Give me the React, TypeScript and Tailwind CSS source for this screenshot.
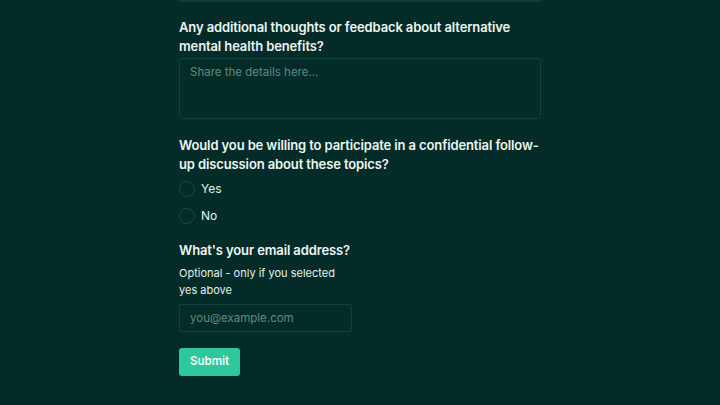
import React, { useState } from 'react';

const font = { fontFamily: 'Inter, "Noto Sans", sans-serif' };

export default function App() {
  const [followUp, setFollowUp] = useState<string | null>(null);

  return (
    <div className="min-h-[405px] w-full bg-[#032c28] text-[#e8f1ee]" style={font}>
      <div className="mx-auto w-[362px] pb-6">
        <div className="h-[2px] w-full rounded-b bg-[#0c3f38]" />

        <div className="mt-[16px]">
          <label className="block text-[13px] font-semibold leading-[19px] tracking-[-0.12px] text-[#eef5f2]">
            Any additional thoughts or feedback about alternative mental health benefits?
          </label>
          <textarea
            placeholder="Share the details here..."
            className="mt-[2px] block h-[61px] w-full resize-none rounded-[2px] border border-[#0e4239] bg-[#032c28] px-[10px] py-[5px] text-[11.5px] text-[#e8f1ee] placeholder:text-[#5e8a80] outline-none"
          />
        </div>

        <div className="mt-[17px]">
          <p className="text-[13px] font-semibold leading-[19px] tracking-[-0.12px] text-[#eef5f2]">
            Would you be willing to participate in a confidential follow-up discussion about these topics?
          </p>
          <div className="mt-[7px] flex flex-col gap-[11px]">
            {['Yes', 'No'].map((opt) => (
              <label key={opt} className="flex cursor-pointer items-center gap-[6px] text-[12px] leading-[16px]">
                <span
                  onClick={() => setFollowUp(opt)}
                  className="flex h-[16px] w-[16px] items-center justify-center rounded-full border border-[#104c42]"
                >
                  {followUp === opt && <span className="h-[8px] w-[8px] rounded-full bg-[#2ec99b]" />}
                </span>
                <span onClick={() => setFollowUp(opt)}>{opt}</span>
              </label>
            ))}
          </div>
        </div>

        <div className="mt-[17px]">
          <p className="text-[13px] font-semibold leading-[19px] tracking-[-0.12px] text-[#eef5f2]">What's your email address?</p>
          <p className="mt-[5px] w-[172px] text-[11px] leading-[17px]">
            Optional - only if you selected yes above
          </p>
          <input
            type="email"
            placeholder="you@example.com"
            className="mt-[5px] block h-[28px] w-[173px] rounded-[2px] border border-[#0e4239] bg-[#032c28] px-[10px] text-[11.5px] text-[#e8f1ee] placeholder:text-[#5e8a80] outline-none"
          />
          <button className="mt-[16px] h-[28px] w-[61px] rounded-[3px] bg-[#2ec99b] text-[11.5px] font-semibold text-[#f2fbf8]">
            Submit
          </button>
        </div>
      </div>
    </div>
  );
}
